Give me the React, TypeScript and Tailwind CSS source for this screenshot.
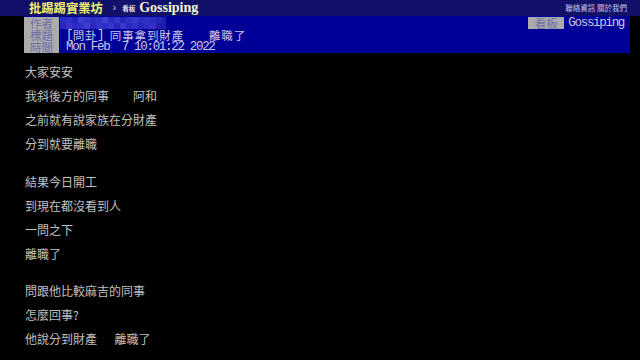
import React from "react";

const CJK = '"Noto Sans CJK TC", "Noto Sans CJK SC", sans-serif';

function isWide(ch: string) {
  return ch.charCodeAt(0) > 0x2e80;
}

function Mono({ text, className = "" }: { text: string; className?: string }) {
  return (
    <span className={"inline-flex whitespace-pre h-[12px] " + className}>
      {Array.from(text).map((ch, i) =>
        isWide(ch) ? (
          <span
            key={i}
            className="inline-block w-[12.4px] text-center text-[11.5px] leading-[12px] font-['Noto_Sans_CJK_TC',sans-serif]"
          >
            {ch}
          </span>
        ) : (
          <span
            key={i}
            className="inline-block w-[6.2px] text-center text-[12.5px] leading-[12px] font-['Liberation_Mono',monospace]"
          >
            {ch}
          </span>
        )
      )}
    </span>
  );
}

const mosaic = [
  ["#2a2ac4", "#3030c8", "#2424bc", "#3c3cce", "#3434c8", "#2c2cc0", "#3030c6", "#4040d0", "#2a2abe", "#3636ca", "#2626bc", "#3232c8", "#3838cc", "#2c2cc2", "#3030c6", "#2828bc", "#2626b8", "#1e1eb0"],
  ["#2626bc", "#3434cc", "#2a2ac0", "#3030c4", "#3c3cce", "#2828be", "#3434ca", "#2e2ec4", "#3636cc", "#2626ba", "#3838cc", "#2a2ac2", "#3030c6", "#2424b8", "#2c2cc0", "#3232c8", "#1e1eac", "#1c1cae"],
];

function Mosaic() {
  return (
    <svg width="106" height="12" viewBox="0 0 106 12" className="block">
      {mosaic.map((row, r) =>
        row.map((c, i) => <rect key={r + "-" + i} x={i * 6} y={r * 6} width="6" height="6" fill={c} />)
      )}
    </svg>
  );
}

const lines: (string | number)[] = [
  "大家安安",
  "我斜後方的同事　　阿和",
  "之前就有說家族在分財產",
  "分到就要離職",
  14,
  "結果今日開工",
  "到現在都沒看到人",
  "一問之下",
  "離職了",
  13,
  "問跟他比較麻吉的同事",
  "怎麼回事?",
  "他說分到財產　  離職了",
];

function Label({ children }: { children: React.ReactNode }) {
  return (
    <div className="w-[35px] h-[12px] bg-[#ababab] text-[#6e6ea6] text-[11.5px] leading-[12px] flex items-center justify-center font-['Noto_Sans_CJK_TC',sans-serif]">
      {children}
    </div>
  );
}

export default function App() {
  return (
    <div className="w-[640px] h-[360px] bg-black overflow-hidden" style={{ fontFamily: CJK }}>
      {/* top bar */}
      <div className="h-[16px] bg-[#11116a] flex items-center">
        <span className="ml-[29px] text-[12.3px] leading-[16px] font-bold text-[#f2f070] font-['Noto_Sans_CJK_TC',sans-serif]">
          批踢踢實業坊
        </span>
        <span className="ml-[10px] text-[10px] leading-[16px] text-[#d0d0e0] font-['Liberation_Sans',sans-serif]">›</span>
        <span className="ml-[6px] text-[6.5px] leading-[16px] font-bold text-[#e0e0f0] font-['Noto_Sans_CJK_TC',sans-serif]">看板</span>
        <span className="ml-[4px] text-[14px] leading-[16px] font-bold text-[#f6f6d2] font-['Liberation_Serif',serif]">
          Gossiping
        </span>
        <span className="ml-auto mr-[13px] text-[7.5px] leading-[16px] text-[#c8c8e0] font-['Noto_Sans_CJK_TC',sans-serif]">
          聯絡資訊 關於我們
        </span>
      </div>

      {/* article meta */}
      <div className="ml-[24px] w-[606px] h-[37px] bg-[#000098] pt-[1px]">
        <div className="flex h-[12px]">
          <Label>作者</Label>
          <div className="ml-[1px]">
            <Mosaic />
          </div>
          <div className="ml-auto flex items-center">
            <div className="w-[36px] h-[12px] bg-[#ababab] text-[#6e6ea6] text-[11.5px] leading-[12px] flex items-center justify-center font-['Noto_Sans_CJK_TC',sans-serif]">
              看板
            </div>
            <Mono text="Gossiping" className="ml-[4px] mr-[6px] text-[#c8c8e2]" />
          </div>
        </div>
        <div className="flex h-[12px]">
          <Label>標題</Label>
          <Mono text="[問卦] 同事拿到財產　　離職了" className="ml-[7px] text-[#c8c8e2]" />
        </div>
        <div className="flex h-[12px]">
          <Label>時間</Label>
          <Mono text="Mon Feb  7 10:01:22 2022" className="ml-[7px] text-[#c8c8e2]" />
        </div>
      </div>

      {/* body */}
      <div className="pl-[25px] pt-[7px] text-[#c0c0c0] text-[12px]">
        {lines.map((l, i) =>
          typeof l === "number" ? (
            <div key={i} className={l === 14 ? "h-[14px]" : "h-[13px]"} />
          ) : (
            <div key={i} className="h-[24px] leading-[24px] whitespace-pre font-['Noto_Sans_CJK_TC',sans-serif]">
              {l}
            </div>
          )
        )}
      </div>
    </div>
  );
}
